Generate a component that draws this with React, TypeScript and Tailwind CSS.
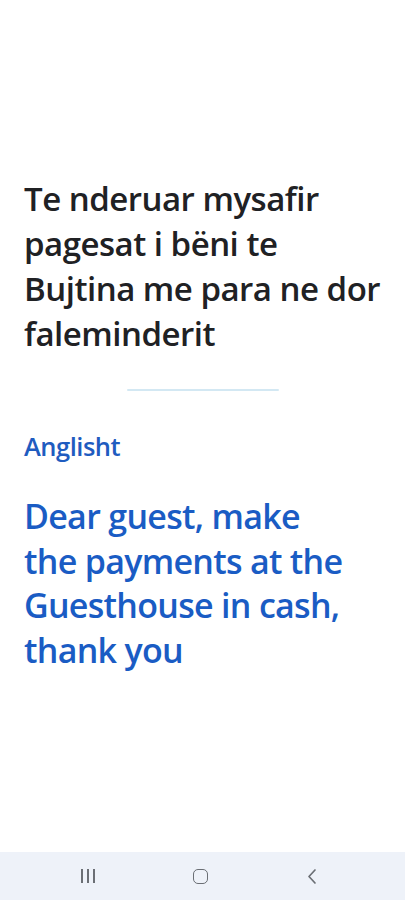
import React from "react";

export default function App() {
  const font = { fontFamily: '"Open Sans", Roboto, sans-serif' };
  return (
    <div className="w-[405px] h-[900px] bg-white flex flex-col" style={font}>
      <div className="flex-1 flex flex-col px-6">
        <div className="h-[176px]" />
        <p className="text-[33px] leading-[45px] font-semibold text-[#202124] tracking-[-0.5px]">
          Te nderuar mysafir
          <br />
          pagesat i bëni te
          <br />
          Bujtina me para ne dor
          <br />
          faleminderit
        </p>
        <div className="mt-[33px] flex justify-center">
          <div className="w-[152px] h-[2px] bg-[#d3e8f3] rounded-full" />
        </div>
        <p className="mt-[39px] text-[25.5px] leading-[32px] font-semibold text-[#1f5cc0] tracking-[-0.5px]">
          Anglisht
        </p>
        <p className="mt-[32px] text-[34px] leading-[44.5px] font-semibold text-[#1a5cc4] tracking-[-0.7px]">
          Dear guest, make
          <br />
          the payments at the
          <br />
          Guesthouse in cash,
          <br />
          thank you
        </p>
      </div>
      <div className="h-[48px] bg-[#eef2f9] flex items-center justify-center gap-[96px] pr-[5px]">
        <div className="w-[16px] flex justify-center">
          <div className="flex gap-[4.5px] h-[14px]">
            <div className="w-[1.8px] h-full bg-[#6b6f75]" />
            <div className="w-[1.8px] h-full bg-[#6b6f75]" />
            <div className="w-[1.8px] h-full bg-[#6b6f75]" />
          </div>
        </div>
        <div className="w-[16px] flex justify-center">
          <div className="w-[15px] h-[15px] rounded-[5px] border-[1.8px] border-[#6b6f75]" />
        </div>
        <div className="w-[16px] flex justify-center">
          <svg width="10" height="17" viewBox="0 0 10 17">
            <path d="M8 2 L2 8.5 L8 15" fill="none" stroke="#6b6f75" strokeWidth="1.7" strokeLinecap="round" strokeLinejoin="round" />
          </svg>
        </div>
      </div>
    </div>
  );
}
